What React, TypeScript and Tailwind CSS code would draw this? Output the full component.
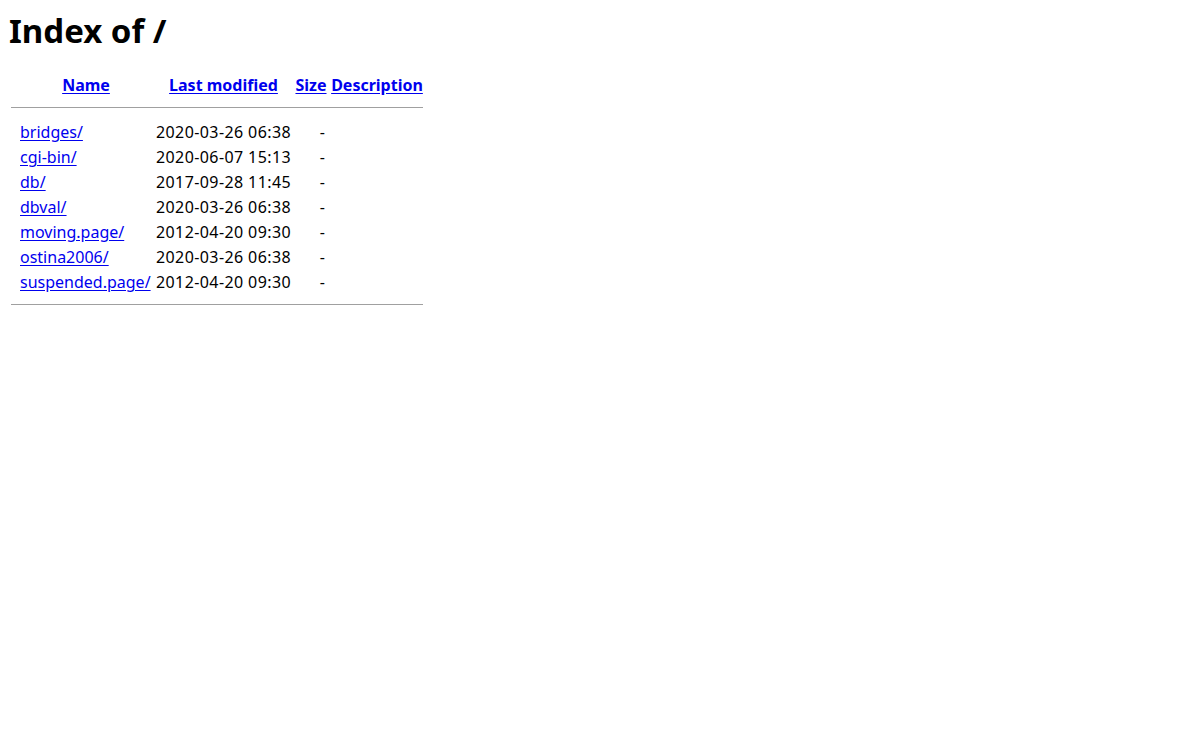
import React from 'react';

type Entry = {
  name: string;
  modified: string;
};

const entries: Entry[] = [
  { name: 'bridges/', modified: '2020-03-26 06:38' },
  { name: 'cgi-bin/', modified: '2020-06-07 15:13' },
  { name: 'db/', modified: '2017-09-28 11:45' },
  { name: 'dbval/', modified: '2020-03-26 06:38' },
  { name: 'moving.page/', modified: '2012-04-20 09:30' },
  { name: 'ostina2006/', modified: '2020-03-26 06:38' },
  { name: 'suspended.page/', modified: '2012-04-20 09:30' },
];

const linkCls = 'text-[#0000ee] underline underline-offset-[2px]';

const Rule: React.FC<{ className: string }> = ({ className }) => (
  <tr>
    <th colSpan={5} className="p-px">
      <div className={`h-0 border-t border-[#a0a0a0] ${className}`} />
    </th>
  </tr>
);

const App: React.FC = () => {
  return (
    <div className="min-h-[740px] bg-white p-2 text-black font-['Noto_Sans','Liberation_Sans',sans-serif]">
      <h1 className="pt-[2px] pl-px text-[33px] font-bold leading-[42px]">Index of /</h1>

      <table className="mt-[19px] table-fixed border-separate border-spacing-[2px] text-[16px] leading-[21px]">
        <thead>
          <tr>
            <th className="w-[7px] p-px pt-[2px]" />
            <th className="w-[134px] p-px pt-[2px] text-center font-bold">
              <a href="#" className={linkCls}>Name</a>
            </th>
            <th className="w-[137px] p-px pt-[2px] text-center font-bold">
              <a href="#" className={linkCls}>Last modified</a>
            </th>
            <th className="w-[34px] p-px pt-[2px] text-center font-bold">
              <a href="#" className={linkCls}>Size</a>
            </th>
            <th className="w-[94px] p-px pt-[2px] text-center font-bold">
              <a href="#" className={linkCls}>Description</a>
            </th>
          </tr>
        </thead>
        <tbody>
          <Rule className="mt-[7px] mb-[10px]" />
          {entries.map((e) => (
            <tr key={e.name}>
              <td className="p-px align-top" />
              <td className="whitespace-nowrap p-px">
                <a href="#" className={linkCls}>{e.name}</a>
              </td>
              <td className="whitespace-nowrap p-px text-right tracking-[0.4px]">{e.modified}</td>
              <td className="p-px pr-[3px] text-right">-</td>
              <td className="p-px" />
            </tr>
          ))}
          <Rule className="mt-[7px] mb-2" />
        </tbody>
      </table>
    </div>
  );
};

export default App;
